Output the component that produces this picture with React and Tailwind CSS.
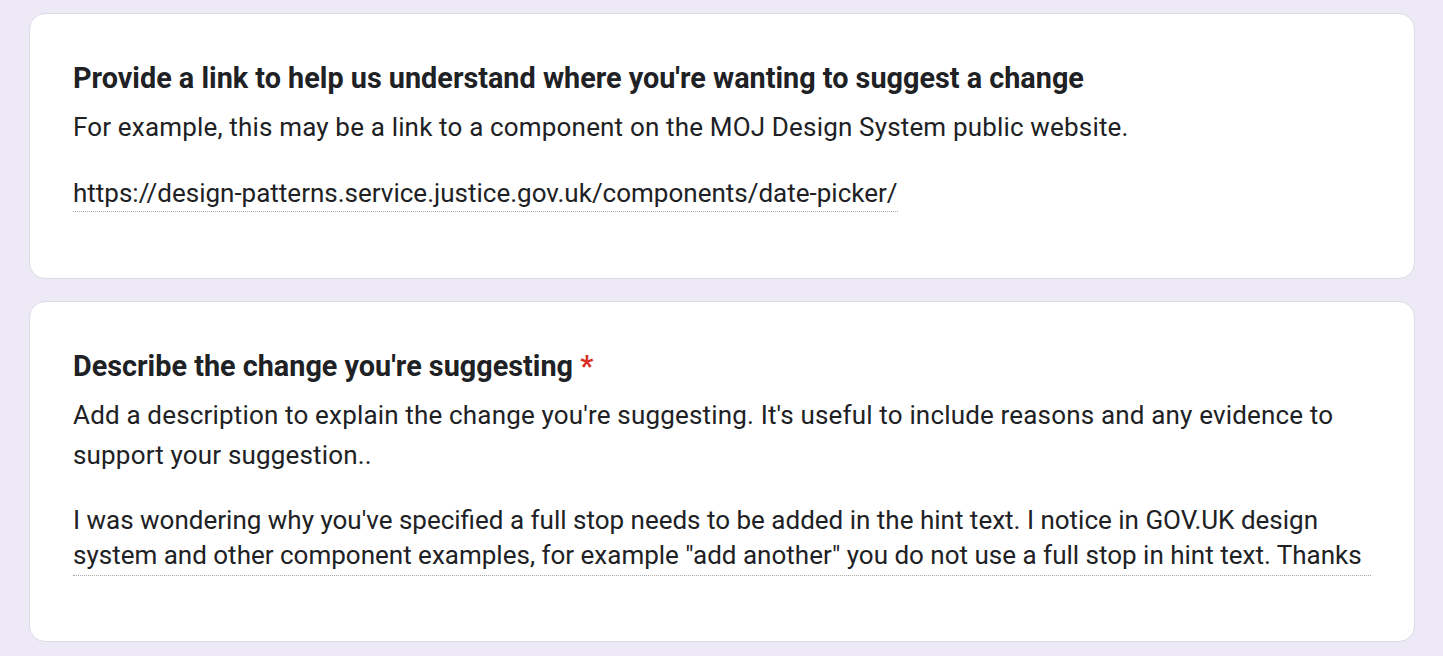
export default function App() {
  return (
    <div className="min-h-screen bg-[#ede9f7] px-[29px] pt-[13px] pb-4 font-['Roboto',sans-serif] text-[#202124]">
      <div className="flex flex-col gap-[22px] w-[1386px]">
        <section className="bg-white border border-[#dadce0] rounded-[16px] px-[43px] pt-[46px] h-[266px]">
          <h2 className="text-[28.8px] font-bold leading-[36px]">
            Provide a link to help us understand where you're wanting to suggest a change
          </h2>
          <p className="text-[26px] leading-[40px] tracking-[0.17px] mt-[11px]">
            For example, this may be a link to a component on the MOJ Design System public website.
          </p>
          <div className="mt-[28px] inline-block border-b border-dotted border-[#a8a8a8] text-[26px] leading-[36px]">
            https://design-patterns.service.justice.gov.uk/components/date-picker/
          </div>
        </section>
        <section className="bg-white border border-[#dadce0] rounded-[16px] px-[43px] pt-[46px] h-[341px]">
          <h2 className="text-[28.8px] font-bold leading-[36px]">
            Describe the change you're suggesting <span className="text-[#d93025]">*</span>
          </h2>
          <p className="text-[26px] leading-[40px] tracking-[0.17px] mt-[11px]">
            Add a description to explain the change you're suggesting. It's useful to include reasons and any evidence to support your suggestion..
          </p>
          <div className="mt-[28px] pb-[2px] border-b border-dotted border-[#a8a8a8] text-[26px] leading-[35px]">
            I was wondering why you've specified a full stop needs to be added in the hint text. I notice in GOV.UK design system and other component examples, for example "add another" you do not use a full stop in hint text. Thanks
          </div>
        </section>
      </div>
    </div>
  )
}
